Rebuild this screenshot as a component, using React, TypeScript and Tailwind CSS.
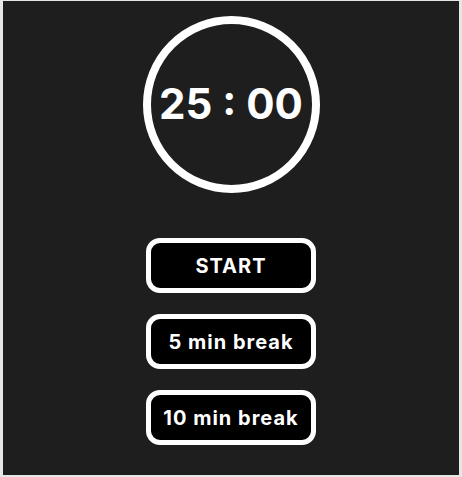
export default function App() {
  return (
    <div className="w-[462px] h-[477px] bg-[#e6e6e6] pl-[3px] pt-[1px]">
      <div
        className="w-[456px] h-[474px] bg-[#1e1e1e] flex flex-col items-center pt-[15px]"
        style={{ fontFamily: 'Inter, "Liberation Sans", sans-serif' }}
      >
        <div className="w-[177px] h-[177px] rounded-full border-[8px] border-white flex items-center justify-center">
          <span className="text-white font-bold text-[42px] leading-none -mt-[2px]">25 : 00</span>
        </div>
        <div className="mt-[45px] flex flex-col gap-[21px]">
          <button className="w-[170px] h-[55px] rounded-[14px] border-[5px] border-white bg-black text-white font-bold text-[20px] tracking-[1px]">
            START
          </button>
          <button className="w-[170px] h-[55px] rounded-[14px] border-[5px] border-white bg-black text-white font-bold text-[20px] tracking-[1px]">
            5 min break
          </button>
          <button className="w-[170px] h-[55px] rounded-[14px] border-[5px] border-white bg-black text-white font-bold text-[20px] tracking-[1px]">
            10 min break
          </button>
        </div>
      </div>
    </div>
  );
}
